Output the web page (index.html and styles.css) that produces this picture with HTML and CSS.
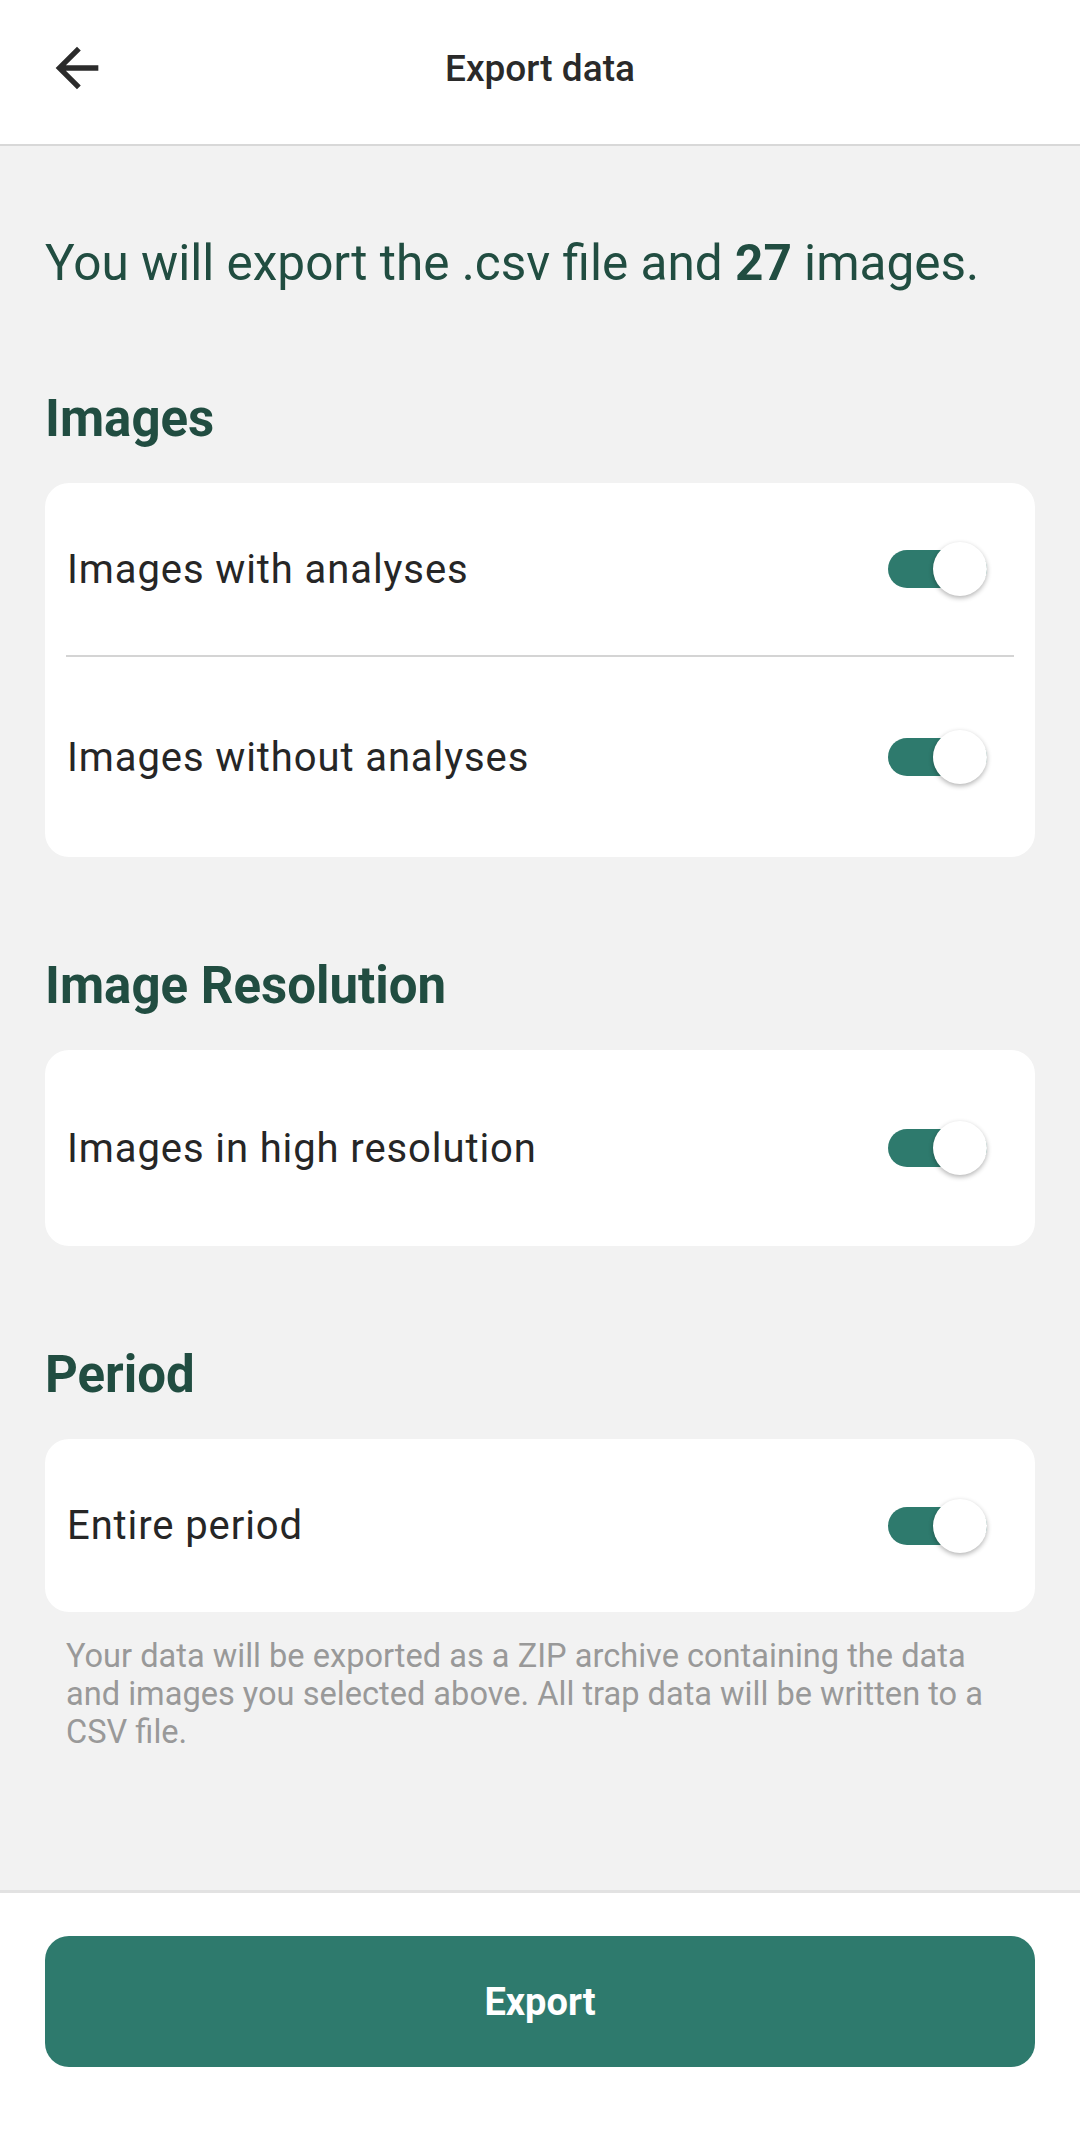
FILE: index.html
```html
<!DOCTYPE html>
<html lang="en">
<head>
    <meta charset="UTF-8">
    <meta name="viewport" content="width=device-width, initial-scale=1.0">
    <title>Export data</title>
    <link rel="stylesheet" href="styles.css">
</head>
<body>
    <header class="top-bar">
        <button class="back-btn" aria-label="Back">
            <svg viewBox="0 0 24 24" width="64" height="64">
                <path d="M20 11H7.83l5.59-5.59L12 4l-8 8 8 8 1.41-1.41L7.83 13H20v-2z" fill="#2b2b2b"/>
            </svg>
        </button>
        <h1 class="title">Export data</h1>
        <span></span>
    </header>

    <main class="content">
        <p class="summary">You will export the .csv file and <b>27</b> images.</p>

        <h2 class="section-title">Images</h2>
        <div class="card card-images">
            <div class="row row-first">
                <span class="row-label">Images with analyses</span>
                <span class="switch on"></span>
            </div>
            <div class="divider"></div>
            <div class="row row-second">
                <span class="row-label">Images without analyses</span>
                <span class="switch on"></span>
            </div>
        </div>

        <h2 class="section-title">Image Resolution</h2>
        <div class="card card-resolution">
            <div class="row">
                <span class="row-label">Images in high resolution</span>
                <span class="switch on"></span>
            </div>
        </div>

        <h2 class="section-title">Period</h2>
        <div class="card card-period">
            <div class="row">
                <span class="row-label">Entire period</span>
                <span class="switch on"></span>
            </div>
        </div>

        <p class="note">Your data will be exported as a ZIP archive containing the data and images you selected above. All trap data will be written to a CSV file.</p>
    </main>

    <footer class="bottom-bar">
        <button class="export-btn">Export</button>
    </footer>
</body>
</html>
```

FILE: styles.css
```css
/* Export data screen */
body {
    font-family: Roboto, "Noto Sans", sans-serif;
    margin: 0;
    padding: 0;
    background-color: #f2f2f2;
    min-height: 100vh;
    display: flex;
    flex-direction: column;
}

.top-bar {
    background-color: white;
    height: 136px;
    padding-bottom: 8px;
    border-bottom: 2px solid #d8d8d8;
    display: grid;
    grid-template-columns: 1fr auto 1fr;
    align-items: center;
}

.back-btn {
    background: none;
    border: none;
    padding: 0;
    margin-left: 45px;
    width: 64px;
    height: 64px;
    display: flex;
}

.title {
    margin: 0;
    font-size: 37px;
    font-weight: 500;
    color: #2a2a2a;
}

.content {
    flex: 1;
    padding: 86px 45px 0;
}

.summary {
    margin: 0;
    font-size: 49.5px;
    line-height: 62px;
    color: #214d41;
}

.summary b {
    font-weight: 700;
}

.section-title {
    margin: 94px 0 33px;
    font-size: 51px;
    line-height: 62px;
    font-weight: 700;
    color: #214d41;
}

.card {
    background-color: white;
    border-radius: 24px;
    padding: 0 21px;
}

.section-title + .card-images {
    margin-top: 33px;
}

.card-images + .section-title,
.card-resolution + .section-title {
    margin-top: 98px;
}

.row {
    display: flex;
    align-items: center;
    justify-content: space-between;
    height: 172px;
}

.card-images {
    padding-bottom: 14px;
}

.card-resolution .row {
    height: 196px;
}

.card-period .row {
    height: 173px;
}

.row-label {
    font-size: 40px;
    letter-spacing: 0.9px;
    color: #262626;
    padding-left: 1px;
}

.divider {
    height: 2px;
    background-color: #d4d4d4;
    margin-bottom: 14px;
}

.switch {
    position: relative;
    width: 99px;
    height: 38px;
    border-radius: 19px;
    background-color: #2e7a6d;
    margin-right: 27px;
}

.switch::after {
    content: "";
    position: absolute;
    right: 0;
    top: -8px;
    width: 54px;
    height: 54px;
    border-radius: 50%;
    background-color: white;
    box-shadow: 0 2px 5px rgba(0, 0, 0, 0.3);
}

.note {
    margin: 25px 21px 0;
    font-size: 32.6px;
    line-height: 38px;
    color: #999999;
}

.bottom-bar {
    background-color: white;
    border-top: 3px solid #e2e2e2;
    padding: 43px 45px 79px;
}

.export-btn {
    width: 100%;
    height: 131px;
    border: none;
    border-radius: 24px;
    background-color: #2e7a6d;
    color: white;
    font-family: Roboto, sans-serif;
    font-size: 38px;
    font-weight: 700;
}
```
